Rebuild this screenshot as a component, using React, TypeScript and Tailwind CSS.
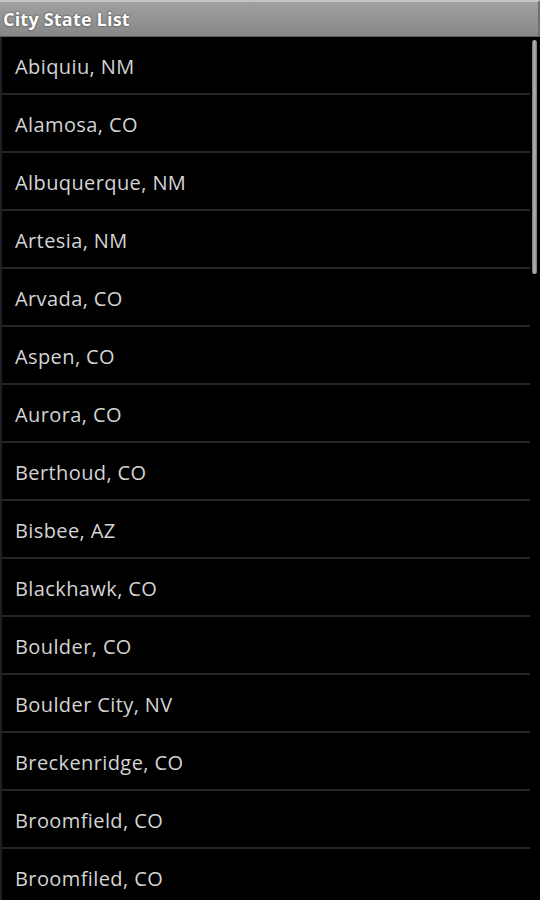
const cities = [
  "Abiquiu, NM",
  "Alamosa, CO",
  "Albuquerque, NM",
  "Artesia, NM",
  "Arvada, CO",
  "Aspen, CO",
  "Aurora, CO",
  "Berthoud, CO",
  "Bisbee, AZ",
  "Blackhawk, CO",
  "Boulder, CO",
  "Boulder City, NV",
  "Breckenridge, CO",
  "Broomfield, CO",
  "Broomfiled, CO",
];

export default function App() {
  return (
    <div className="relative h-[900px] w-[540px] overflow-hidden bg-black font-['Open_Sans',sans-serif]">
      <div className="flex h-[37px] items-center border-t-2 border-r-2 border-b border-t-[#c4c4c4] border-r-[#707070] border-b-[#5a5a5a] bg-gradient-to-b from-[#a0a0a0] to-[#878787] pl-[3px]">
        <h1 className="text-[18px] font-bold tracking-[0.2px] text-white [text-shadow:0_0_2px_rgba(0,0,0,0.75)]">
          City State List
        </h1>
      </div>

      <ul className="border-l-2 border-[#1c1f26] pr-[10px]">
        {cities.map((city) => (
          <li
            key={city}
            className="flex h-[58px] items-center border-b-2 border-[#262626] pl-[13px] pt-[4px] text-[20px] tracking-[0.4px] text-[#d4d4d4]"
          >
            {city}
          </li>
        ))}
      </ul>

      {/* scroll indicator */}
      <div className="absolute right-[3px] top-[40px] h-[234px] w-[5px] rounded-full bg-gradient-to-r from-[#777] via-[#b5b5b5] to-[#777]" />
    </div>
  );
}
